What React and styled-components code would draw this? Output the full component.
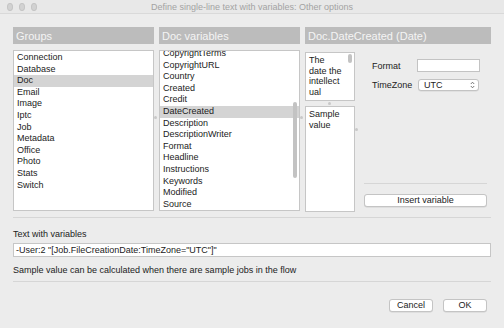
import styled, { createGlobalStyle } from "styled-components";

const Global = createGlobalStyle`
  html, body { margin: 0; padding: 0; background: #ececec; }
  body { font-family: "Liberation Sans", Arial, sans-serif; }
`;

const Window = styled.div`
  width: 504px;
  height: 328px;
  background: #ececec;
  display: flex;
  flex-direction: column;
  overflow: hidden;
  color: #222;
  font-size: 9px;
`;

const TitleBar = styled.div`
  height: 13px;
  display: flex;
  align-items: center;
  background: #e8e8e8;
  border-bottom: 1px solid #d9d9d9;
`;

const Lights = styled.div`
  display: flex;
  gap: 6px;
  padding-left: 7px;
  width: 30px;
`;

const Light = styled.span`
  width: 6px;
  height: 6px;
  border-radius: 50%;
  background: #d2d2d2;
  border: 0.5px solid #c4c4c4;
`;

const Title = styled.div`
  flex: 1;
  text-align: center;
  color: #a3a3a3;
  font-size: 9px;
  margin-right: 37px;
  white-space: nowrap;
`;

const Body = styled.div`
  padding: 13px 13px 0;
  display: flex;
  flex-direction: column;
`;

const Columns = styled.div`
  display: grid;
  grid-template-columns: 141px 141px 186px;
  column-gap: 5px;
  height: 182px;
`;

const Column = styled.div`
  display: flex;
  flex-direction: column;
  gap: 6px;
  position: relative;
`;

const Header = styled.div`
  height: 17px;
  background: #bcbcbc;
  color: #f4f4f4;
  font-size: 11px;
  display: flex;
  align-items: center;
  padding-left: 3px;
  white-space: nowrap;
`;

const List = styled.div`
  flex: 1;
  background: #fff;
  border: 1px solid #c6c6c6;
  overflow: hidden;
  position: relative;
  padding-top: 1px;
`;

const ListInner = styled.div`
  margin-top: ${(p) => p.$offset || 0}px;
`;

const Row = styled.div`
  height: 11.6px;
  line-height: 11.6px;
  padding-left: 3px;
  font-size: 9px;
  white-space: nowrap;
  background: ${(p) => (p.$selected ? "#d4d4d4" : "transparent")};
`;

const Thumb = styled.div`
  position: absolute;
  right: 2px;
  top: ${(p) => p.$top}px;
  width: 4px;
  height: ${(p) => p.$h}px;
  border-radius: 2px;
  background: #c3c3c3;
`;

const Dot = styled.span`
  position: absolute;
  width: 3px;
  height: 3px;
  border-radius: 50%;
  background: #c8c8c8;
  left: ${(p) => p.$x}px;
  top: ${(p) => p.$y}px;
`;

const DetailBody = styled.div`
  flex: 1;
  display: flex;
`;

const SideCol = styled.div`
  width: 50px;
  display: flex;
  flex-direction: column;
  gap: 5px;
  padding-top: 2px;
  margin-bottom: -1px;
`;

const TextBox = styled.div`
  background: #fff;
  border: 1px solid #c6c6c6;
  padding: 2px 3px;
  font-size: 9px;
  line-height: 10.7px;
  overflow: hidden;
  position: relative;
  height: ${(p) => (p.$h ? `${p.$h}px` : "auto")};
  flex: ${(p) => (p.$h ? "none" : 1)};
  box-sizing: border-box;
`;

const Line = styled.div`
  white-space: nowrap;
`;

const Options = styled.div`
  flex: 1;
  display: flex;
  flex-direction: column;
  padding: 9px 4px 4px 9px;
`;

const Form = styled.div`
  display: grid;
  grid-template-columns: 45px 63px;
  row-gap: 7px;
  padding-left: 8px;
  align-items: center;
`;

const Label = styled.span`
  font-size: 9px;
  white-space: nowrap;
`;

const Field = styled.div`
  height: 13px;
  background: #fff;
  border: 1px solid #c3c3c3;
  box-sizing: border-box;
`;

const Select = styled.div`
  height: 12px;
  width: 61px;
  margin-left: 1px;
  background: #fff;
  border: 1px solid #c3c3c3;
  border-radius: 3px;
  box-sizing: border-box;
  display: flex;
  align-items: center;
  justify-content: space-between;
  padding: 0 3px 0 5px;
  font-size: 9px;
  box-shadow: 0 0.5px 0.5px rgba(0, 0, 0, 0.1);
`;

const Spacer = styled.div`
  flex: 1;
`;

const Rule = styled.div`
  height: 1px;
  background: #d6d6d6;
  margin: ${(p) => p.$m || "0"};
`;

const Button = styled.button`
  height: 13px;
  width: ${(p) => p.$w || "auto"};
  margin-top: ${(p) => p.$mt || 0}px;
  padding: 0;
  background: #fff;
  border: 1px solid #c4c4c4;
  border-radius: 3px;
  font-family: "Liberation Sans", Arial, sans-serif;
  font-size: 9px;
  color: #222;
  line-height: 11px;
  box-shadow: 0 0.5px 0.5px rgba(0, 0, 0, 0.12);
`;

const FieldLabel = styled.div`
  margin-top: 11px;
  font-size: 9px;
  height: 10px;
  line-height: 10px;
`;

const TextInput = styled.div`
  margin-top: 4px;
  height: 14px;
  background: #fff;
  border: 1px solid #c6c6c6;
  box-sizing: border-box;
  padding-left: 2px;
  font-size: 9px;
  line-height: 12px;
  white-space: nowrap;
`;

const Note = styled.div`
  margin-top: 8px;
  font-size: 9px;
  line-height: 10px;
`;

const Footer = styled.div`
  display: flex;
  justify-content: flex-end;
  gap: 10px;
  padding-right: 4px;
  margin-top: 17px;
`;

const groups = ["Connection", "Database", "Doc", "Email", "Image", "Iptc", "Job", "Metadata", "Office", "Photo", "Stats", "Switch"];
const docVars = ["CopyrightTerms", "CopyrightURL", "Country", "Created", "Credit", "DateCreated", "Description", "DescriptionWriter", "Format", "Headline", "Instructions", "Keywords", "Modified", "Source"];
const descLines = ["The", "date the", "intellect", "ual", "content"];

const Chevrons = () => (
  <svg width="5" height="8" viewBox="0 0 5 8">
    <path d="M0.8 3 L2.5 1.2 L4.2 3 M0.8 5 L2.5 6.8 L4.2 5" fill="none" stroke="#555" strokeWidth="0.8" />
  </svg>
);

export default function App() {
  return (
    <Window>
      <Global />
      <TitleBar>
        <Lights>
          <Light />
          <Light />
          <Light />
        </Lights>
        <Title>Define single-line text with variables: Other options</Title>
      </TitleBar>
      <Body>
        <Columns>
          <Column>
            <Header>Groups</Header>
            <List>
              <ListInner>
                {groups.map((g) => (
                  <Row key={g} $selected={g === "Doc"}>{g}</Row>
                ))}
              </ListInner>
            </List>
            <Dot $x={141} $y={89} />
          </Column>
          <Column>
            <Header>Doc variables</Header>
            <List>
              <ListInner $offset={-4}>
                {docVars.map((v) => (
                  <Row key={v} $selected={v === "DateCreated"}>{v}</Row>
                ))}
              </ListInner>
              <Thumb $top={51} $h={76} />
            </List>
            <Dot $x={141} $y={89} />
          </Column>
          <Column>
            <Header>Doc.DateCreated (Date)</Header>
            <DetailBody>
              <SideCol>
                <TextBox $h={49}>
                  {descLines.map((l) => (
                    <Line key={l}>{l}</Line>
                  ))}
                  <Thumb $top={1} $h={9} />
                </TextBox>
                <TextBox>Sample value</TextBox>
              </SideCol>
              <Options>
                <Form>
                  <Label>Format</Label>
                  <Field />
                  <Label>TimeZone</Label>
                  <Select>
                    UTC
                    <Chevrons />
                  </Select>
                </Form>
                <Spacer />
                <Rule />
                <Button $mt={10}>Insert variable</Button>
              </Options>
            </DetailBody>
            <Dot $x={23} $y={75} />
            <Dot $x={50} $y={101} />
          </Column>
        </Columns>
        <Rule $m="8px 0 0" />
        <FieldLabel>Text with variables</FieldLabel>
        <TextInput>-User:2 "[Job.FileCreationDate:TimeZone="UTC"]"</TextInput>
        <Note>Sample value can be calculated when there are sample jobs in the flow</Note>
        <Rule $m="6px 0 0" />
        <Footer>
          <Button $w="44px">Cancel</Button>
          <Button $w="44px">OK</Button>
        </Footer>
      </Body>
    </Window>
  );
}
